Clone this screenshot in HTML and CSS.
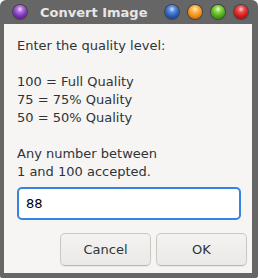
FILE: index.html
```html
<!DOCTYPE html>
<html>
<head>
<meta charset="utf-8">
<link rel="stylesheet" href="styles.css">
</head>
<body>
<div class="window">
  <div class="titlebar">
    <span class="ball purple"></span>
    <span class="title">Convert Image</span>
    <span class="spacer"></span>
    <span class="ball blue"></span>
    <span class="ball orange"></span>
    <span class="ball green"></span>
    <span class="ball red"></span>
  </div>
  <div class="content">
    <div class="message">Enter the quality level:<br><br>100 = Full Quality<br>75 = 75% Quality<br>50 = 50% Quality<br><br>Any number between<br>1 and 100 accepted.</div>
    <div class="entry">88</div>
    <div class="buttons">
      <div class="button">Cancel</div>
      <div class="button">OK</div>
    </div>
  </div>
</div>
</body>
</html>
```
FILE: styles.css
```css
html, body {
  margin: 0;
  padding: 0;
  background: #ffffff;
}
.window {
  width: 258px;
  height: 278px;
  box-sizing: border-box;
  background: #666666;
  border-radius: 6px 6px 2px 2px;
  padding: 0 6px 5px 4px;
  display: flex;
  flex-direction: column;
  font-family: "DejaVu Sans", sans-serif;
}
.titlebar {
  height: 24px;
  flex: none;
  display: flex;
  align-items: center;
  padding: 0 6px 0 9px;
  gap: 9px;
}
.title {
  color: #e6e6e6;
  font-weight: bold;
  font-size: 13px;
  white-space: nowrap;
  flex: none;
  margin-left: 4px;
  margin-top: 1px;
}
.spacer { flex: 1; }
.ball {
  width: 14px;
  height: 14px;
  border-radius: 50%;
  flex: none;
  box-shadow: 0 0 0 1px rgba(40,40,40,0.55);
}
.purple { background: radial-gradient(circle at 50% 30%, #f0d8ff 0, #b070e0 25%, #7a2fb0 60%, #4a1470 100%); }
.blue   { background: radial-gradient(circle at 50% 30%, #d6e6ff 0, #5a8ee0 25%, #2a58b0 60%, #12306a 100%); }
.orange { background: radial-gradient(circle at 50% 30%, #fff0c8 0, #ffb850 25%, #f08a10 60%, #a05006 100%); }
.green  { background: radial-gradient(circle at 50% 30%, #eaffd0 0, #8ad848 25%, #4ea618 60%, #2a6808 100%); }
.red    { background: radial-gradient(circle at 50% 30%, #ffd8d8 0, #f05050 25%, #d01818 60%, #7a0808 100%); }
.content {
  flex: 1;
  background: #f6f5f4;
  padding: 13px 11px 7px 13px;
  display: flex;
  flex-direction: column;
}
.message {
  font-size: 13px;
  line-height: 18px;
  color: #2e3436;
}
.entry {
  margin-top: 6px;
  height: 33px;
  box-sizing: border-box;
  border: 2px solid #3584e4;
  border-radius: 5px;
  background: #ffffff;
  font-size: 13px;
  color: #000000;
  padding: 0 7px;
  display: flex;
  align-items: center;
}
.buttons {
  margin-top: auto;
  margin-right: -6px;
  display: flex;
  justify-content: flex-end;
  gap: 5px;
}
.button {
  width: 91px;
  height: 33px;
  box-sizing: border-box;
  border: 1px solid #cdc7c2;
  border-bottom-color: #bfb8b1;
  border-radius: 5px;
  background: linear-gradient(#f4f3f2, #ebe9e7);
  box-shadow: 0 1px 1px rgba(0,0,0,0.06);
  color: #2e3436;
  font-size: 13px;
  display: flex;
  align-items: center;
  justify-content: center;
}
```
